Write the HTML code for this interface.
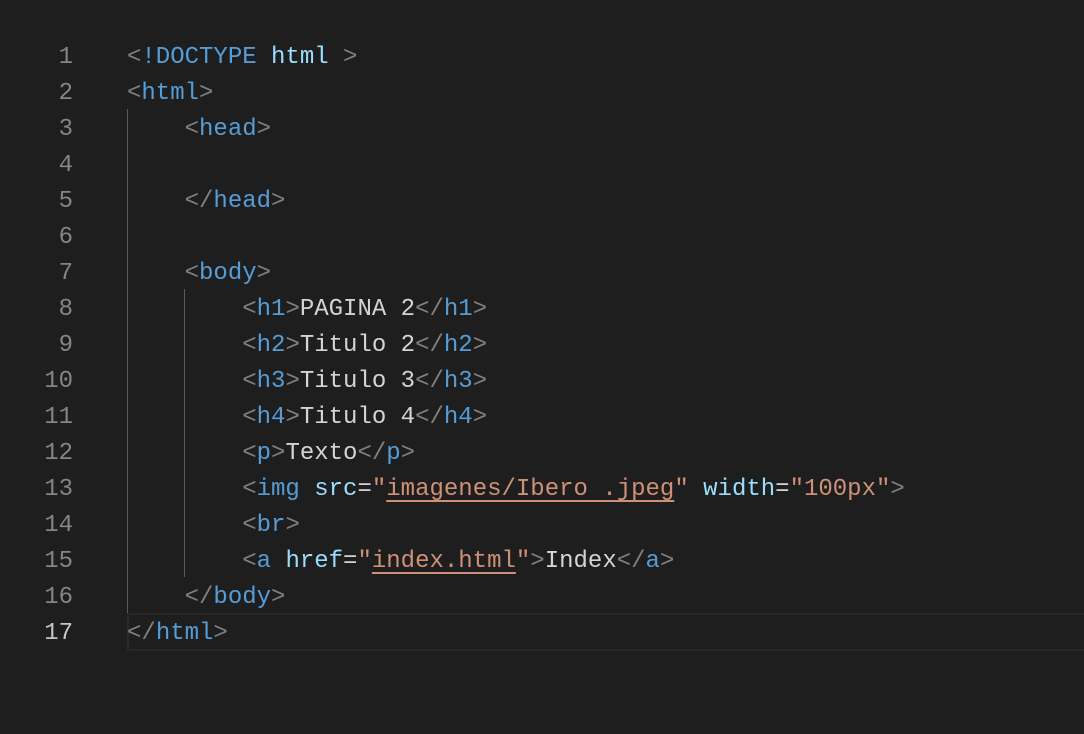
<!DOCTYPE html>
<html><head><style>
body{margin:0;width:1084px;height:734px;background:#1e1e1e;overflow:hidden;position:relative;font-family:"Liberation Mono","DejaVu Sans Mono",monospace;font-size:24px}
.l{position:absolute;left:127px;height:36px;line-height:36px;white-space:pre;color:#d4d4d4;margin-top:3px}
.n{position:absolute;left:0;width:73px;text-align:right;height:36px;line-height:36px;color:#858585;margin-top:3px}
.b{color:#808080}.t{color:#569cd6}.a{color:#9cdcfe}.s{color:#ce9178}
.u{text-decoration:underline;text-decoration-color:#ce9178;text-underline-offset:5px;text-decoration-thickness:2px}
.g{position:absolute;width:1px;background:#5a5a5a}
</style></head><body>
<div style="position:absolute;left:127px;top:613px;width:957px;height:34px;border:2px solid #282828;border-right:none"></div>
<div class="g" style="left:127px;top:109px;height:504px"></div>
<div class="g" style="left:184px;top:289px;height:288px"></div>
<div class="n" style="top:37px">1</div><div class="l" style="top:37px"><span class="b">&lt;</span><span class="t">!DOCTYPE</span> <span class="a">html</span> <span class="b">&gt;</span></div>
<div class="n" style="top:73px">2</div><div class="l" style="top:73px"><span class="b">&lt;</span><span class="t">html</span><span class="b">&gt;</span></div>
<div class="n" style="top:109px">3</div><div class="l" style="top:109px">    <span class="b">&lt;</span><span class="t">head</span><span class="b">&gt;</span></div>
<div class="n" style="top:145px">4</div>
<div class="n" style="top:181px">5</div><div class="l" style="top:181px">    <span class="b">&lt;/</span><span class="t">head</span><span class="b">&gt;</span></div>
<div class="n" style="top:217px">6</div>
<div class="n" style="top:253px">7</div><div class="l" style="top:253px">    <span class="b">&lt;</span><span class="t">body</span><span class="b">&gt;</span></div>
<div class="n" style="top:289px">8</div><div class="l" style="top:289px">        <span class="b">&lt;</span><span class="t">h1</span><span class="b">&gt;</span>PAGINA 2<span class="b">&lt;/</span><span class="t">h1</span><span class="b">&gt;</span></div>
<div class="n" style="top:325px">9</div><div class="l" style="top:325px">        <span class="b">&lt;</span><span class="t">h2</span><span class="b">&gt;</span>Titulo 2<span class="b">&lt;/</span><span class="t">h2</span><span class="b">&gt;</span></div>
<div class="n" style="top:361px">10</div><div class="l" style="top:361px">        <span class="b">&lt;</span><span class="t">h3</span><span class="b">&gt;</span>Titulo 3<span class="b">&lt;/</span><span class="t">h3</span><span class="b">&gt;</span></div>
<div class="n" style="top:397px">11</div><div class="l" style="top:397px">        <span class="b">&lt;</span><span class="t">h4</span><span class="b">&gt;</span>Titulo 4<span class="b">&lt;/</span><span class="t">h4</span><span class="b">&gt;</span></div>
<div class="n" style="top:433px">12</div><div class="l" style="top:433px">        <span class="b">&lt;</span><span class="t">p</span><span class="b">&gt;</span>Texto<span class="b">&lt;/</span><span class="t">p</span><span class="b">&gt;</span></div>
<div class="n" style="top:469px">13</div><div class="l" style="top:469px">        <span class="b">&lt;</span><span class="t">img</span> <span class="a">src</span>=<span class="s">"<span class="u">imagenes/Ibero .jpeg</span>"</span> <span class="a">width</span>=<span class="s">"100px"</span><span class="b">&gt;</span></div>
<div class="n" style="top:505px">14</div><div class="l" style="top:505px">        <span class="b">&lt;</span><span class="t">br</span><span class="b">&gt;</span></div>
<div class="n" style="top:541px">15</div><div class="l" style="top:541px">        <span class="b">&lt;</span><span class="t">a</span> <span class="a">href</span>=<span class="s">"<span class="u">index.html</span>"</span><span class="b">&gt;</span>Index<span class="b">&lt;/</span><span class="t">a</span><span class="b">&gt;</span></div>
<div class="n" style="top:577px">16</div><div class="l" style="top:577px">    <span class="b">&lt;/</span><span class="t">body</span><span class="b">&gt;</span></div>
<div class="n" style="top:613px;color:#c6c6c6">17</div><div class="l" style="top:613px"><span class="b">&lt;/</span><span class="t">html</span><span class="b">&gt;</span></div>
</body></html>
